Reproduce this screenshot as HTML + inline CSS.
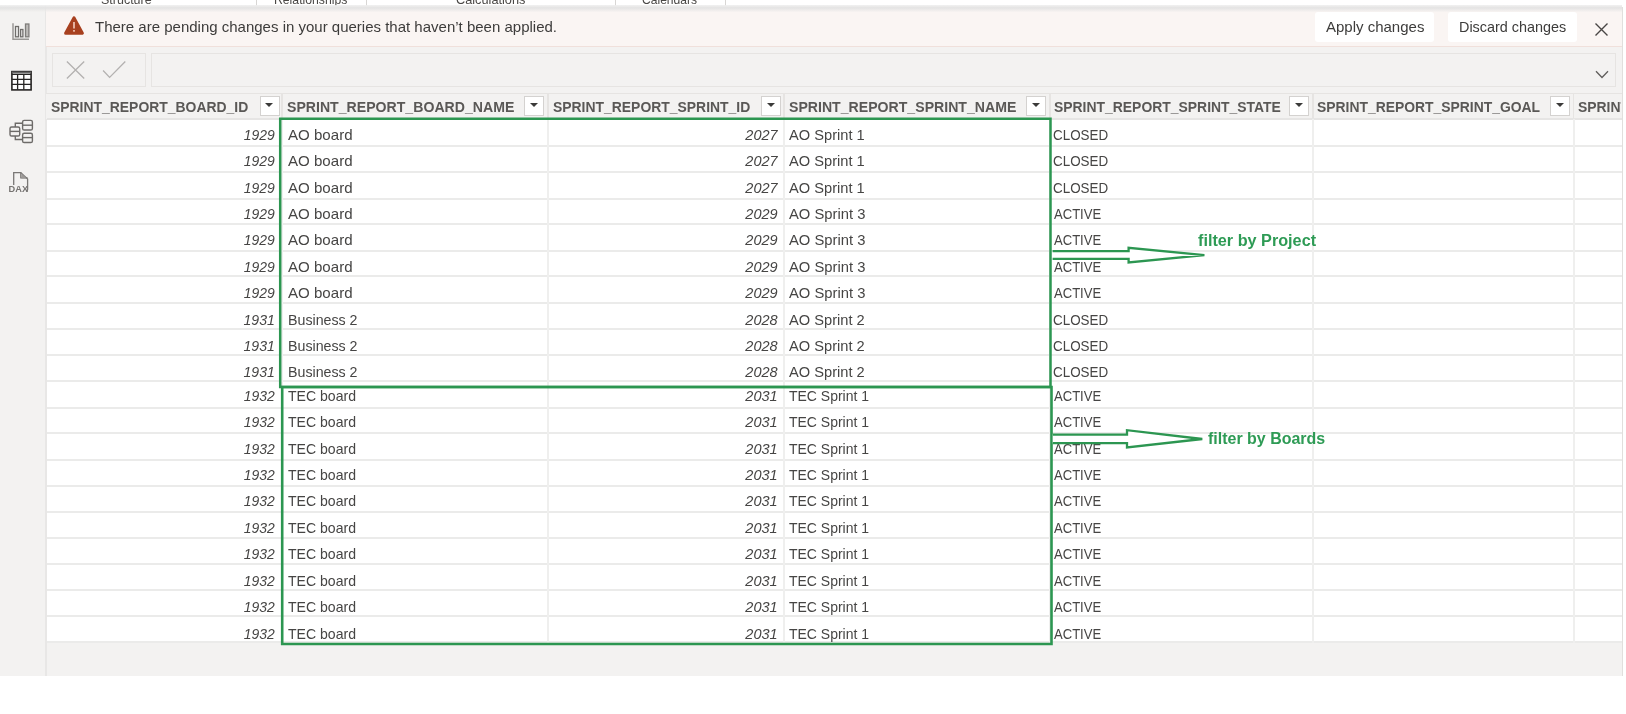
<!DOCTYPE html>
<html><head><meta charset="utf-8"><style>
*{margin:0;padding:0;box-sizing:border-box}
html,body{width:1626px;height:714px;overflow:hidden;background:#fff;font-family:"Liberation Sans", sans-serif}
body{will-change:transform}
.a{position:absolute;white-space:nowrap}
.t{position:absolute;white-space:nowrap;font-size:14.5px;line-height:14.5px;color:#464544}
.r{text-align:right}
.i{font-style:italic}
.h{position:absolute;white-space:nowrap;font-size:14.5px;line-height:14.5px;font-weight:bold;color:#5a5856}
.dd{position:absolute;top:96.2px;width:20.2px;height:19.5px;background:#fff;border:1.5px solid #d4d2d0}
.dd:after{content:"";position:absolute;left:4.5px;top:5.5px;border-left:4px solid transparent;border-right:4px solid transparent;border-top:4.8px solid #3b3a39}
</style></head>
<body>
<div class="a" style="left:0;top:0;width:1626px;height:6px;background:#fff"></div>
<div class="a" style="left:100.9px;top:-7.5px;font-size:13px;line-height:13px;color:#4a4846;transform:scaleX(0.96);transform-origin:left">Structure</div>
<div class="a" style="left:274.4px;top:-7.5px;font-size:13px;line-height:13px;color:#4a4846;transform:scaleX(0.94);transform-origin:left">Relationships</div>
<div class="a" style="left:456px;top:-7.5px;font-size:13px;line-height:13px;color:#4a4846;transform:scaleX(0.98);transform-origin:left">Calculations</div>
<div class="a" style="left:642px;top:-7.5px;font-size:13px;line-height:13px;color:#4a4846;transform:scaleX(0.93);transform-origin:left">Calendars</div>
<div class="a" style="left:255.9px;top:0;width:1px;height:6px;background:#d8d6d4"></div>
<div class="a" style="left:365.6px;top:0;width:1px;height:6px;background:#d8d6d4"></div>
<div class="a" style="left:614.5px;top:0;width:1px;height:6px;background:#d8d6d4"></div>
<div class="a" style="left:725px;top:0;width:1px;height:6px;background:#d8d6d4"></div>
<div class="a" style="left:0;top:4.5px;width:1622px;height:7px;background:linear-gradient(rgba(240,240,240,0.6),#e3e3e3 40%,rgba(243,240,238,0.3))"></div>
<div class="a" style="left:0;top:6px;width:47px;height:670px;background:#f3f2f1;border-right:2px solid #e8e7e6"></div>
<div class="a" style="left:47px;top:7px;width:1575px;height:669px;background:#f3f2f1"></div>
<div class="a" style="left:1622px;top:7px;width:1px;height:669px;background:#e1dfdd"></div>
<div class="a" style="left:46px;top:6px;width:1576px;height:41px;background:#faf5f3;border-bottom:1px solid #f0e0db"></div>
<div class="a" style="left:0;top:4.5px;width:1622px;height:7px;background:linear-gradient(rgba(240,240,240,0.6),#e3e3e3 40%,rgba(243,240,238,0.3))"></div>
<svg class="a" style="left:63px;top:15px" width="22" height="21" viewBox="0 0 22 21"><path d="M11 3 L19.3 18.2 L2.7 18.2 Z" fill="#a8401f" stroke="#a8401f" stroke-width="3.2" stroke-linejoin="round"/><rect x="10.2" y="7" width="1.6" height="6.5" fill="#f3cdbd"/><rect x="10.2" y="15" width="1.6" height="1.7" fill="#f3cdbd"/></svg>
<div class="a" style="left:95px;top:19.4px;font-size:15px;line-height:15px;color:#3d3c3b">There are pending changes in your queries that haven’t been applied.</div>
<div class="a" style="left:1315px;top:12px;width:119px;height:30px;background:#fff;border-radius:3px"></div>
<div class="a" style="left:1448px;top:12px;width:128.5px;height:30px;background:#fff;border-radius:3px"></div>
<div class="a" style="left:1326px;top:18.5px;font-size:15px;line-height:15px;color:#3d3c3b">Apply changes</div>
<div class="a" style="left:1459.4px;top:18.5px;font-size:15px;line-height:15px;color:#3d3c3b;transform:scaleX(0.96);transform-origin:left">Discard changes</div>
<svg class="a" style="left:1594px;top:22px" width="15" height="15" viewBox="0 0 15 15"><path d="M1.5 1.5 L13.5 13.5 M13.5 1.5 L1.5 13.5" stroke="#484644" stroke-width="1.4"/></svg>
<div class="a" style="left:52px;top:53px;width:94px;height:34px;border:1px solid #e6e4e2;background:#f3f2f1"></div>
<svg class="a" style="left:64px;top:60px" width="64" height="20" viewBox="0 0 64 20"><path d="M2.9 1.5 L20.2 18.5 M20.2 1.5 L2.9 18.5" stroke="#b3b1b0" stroke-width="1.3"/><path d="M39.1 10.5 L45.6 17.4 L61.3 1.5" stroke="#b3b1b0" stroke-width="1.3" fill="none"/></svg>
<div class="a" style="left:151px;top:53px;width:1465px;height:34px;border:1px solid #e6e4e2;background:#f3f2f1"></div>
<svg class="a" style="left:1595px;top:70px" width="14" height="9" viewBox="0 0 14 9"><path d="M1 1.2 L7 7.5 L13 1.2" stroke="#605e5c" stroke-width="1.3" fill="none"/></svg>
<div class="a" style="left:46px;top:92.5px;width:1576px;height:26.5px;background:#f3f2f1;border-top:1px solid #e6e4e2"></div>
<div class="h" style="left:51.2px;top:100.3px;transform:scaleX(0.96);transform-origin:left">SPRINT_REPORT_BOARD_ID</div>
<div class="h" style="left:287.3px;top:100.3px;transform:scaleX(0.973);transform-origin:left">SPRINT_REPORT_BOARD_NAME</div>
<div class="h" style="left:552.5px;top:100.3px;transform:scaleX(0.96);transform-origin:left">SPRINT_REPORT_SPRINT_ID</div>
<div class="h" style="left:789px;top:100.3px;transform:scaleX(0.973);transform-origin:left">SPRINT_REPORT_SPRINT_NAME</div>
<div class="h" style="left:1054px;top:100.3px;transform:scaleX(0.96);transform-origin:left">SPRINT_REPORT_SPRINT_STATE</div>
<div class="h" style="left:1317.0px;top:100.3px;transform:scaleX(0.958);transform-origin:left">SPRINT_REPORT_SPRINT_GOAL</div>
<div class="a" style="left:1578.3px;top:0;width:42.700000000000045px;height:120px;overflow:hidden"><div class="h" style="left:0;top:100.3px;transform:scaleX(0.96);transform-origin:left">SPRINT_REPORT</div></div>
<div class="dd" style="left:259.5px"></div>
<div class="dd" style="left:524px"></div>
<div class="dd" style="left:761px"></div>
<div class="dd" style="left:1026.3px"></div>
<div class="dd" style="left:1289px"></div>
<div class="dd" style="left:1550.3px"></div>
<div class="a" style="left:281.0px;top:93px;width:1.5px;height:26px;background:#e6e4e2"></div>
<div class="a" style="left:547.0px;top:93px;width:1.5px;height:26px;background:#e6e4e2"></div>
<div class="a" style="left:783.0px;top:93px;width:1.5px;height:26px;background:#e6e4e2"></div>
<div class="a" style="left:1049.0px;top:93px;width:1.5px;height:26px;background:#e6e4e2"></div>
<div class="a" style="left:1312.0px;top:93px;width:1.5px;height:26px;background:#e6e4e2"></div>
<div class="a" style="left:1572.5px;top:93px;width:1.5px;height:26px;background:#e6e4e2"></div>
<div class="a" style="left:47px;top:118.8px;width:1575px;height:524.2800000000001px;background:#fff"></div>
<div class="a" style="left:47px;top:145px;width:1575px;height:2px;background:#ebebea"></div>
<div class="a" style="left:47px;top:171px;width:1575px;height:2px;background:#ebebea"></div>
<div class="a" style="left:47px;top:198px;width:1575px;height:2px;background:#ebebea"></div>
<div class="a" style="left:47px;top:223px;width:1575px;height:2px;background:#ebebea"></div>
<div class="a" style="left:47px;top:250px;width:1575px;height:2px;background:#ebebea"></div>
<div class="a" style="left:47px;top:275px;width:1575px;height:2px;background:#ebebea"></div>
<div class="a" style="left:47px;top:302px;width:1575px;height:2px;background:#ebebea"></div>
<div class="a" style="left:47px;top:328px;width:1575px;height:2px;background:#ebebea"></div>
<div class="a" style="left:47px;top:354px;width:1575px;height:2px;background:#ebebea"></div>
<div class="a" style="left:47px;top:380px;width:1575px;height:2px;background:#ebebea"></div>
<div class="a" style="left:47px;top:407px;width:1575px;height:2px;background:#ebebea"></div>
<div class="a" style="left:47px;top:432px;width:1575px;height:2px;background:#ebebea"></div>
<div class="a" style="left:47px;top:459px;width:1575px;height:2px;background:#ebebea"></div>
<div class="a" style="left:47px;top:485px;width:1575px;height:2px;background:#ebebea"></div>
<div class="a" style="left:47px;top:511px;width:1575px;height:2px;background:#ebebea"></div>
<div class="a" style="left:47px;top:537px;width:1575px;height:2px;background:#ebebea"></div>
<div class="a" style="left:47px;top:563px;width:1575px;height:2px;background:#ebebea"></div>
<div class="a" style="left:47px;top:589px;width:1575px;height:2px;background:#ebebea"></div>
<div class="a" style="left:47px;top:615px;width:1575px;height:2px;background:#ebebea"></div>
<div class="a" style="left:47px;top:641px;width:1575px;height:2px;background:#ebebea"></div>
<div class="a" style="left:47px;top:118px;width:1575px;height:1.5px;background:#e6e5e4"></div>
<div class="a" style="left:281.0px;top:118.8px;width:2px;height:524.2800000000001px;background:#efefee"></div>
<div class="a" style="left:547.0px;top:118.8px;width:2px;height:524.2800000000001px;background:#efefee"></div>
<div class="a" style="left:783.0px;top:118.8px;width:2px;height:524.2800000000001px;background:#efefee"></div>
<div class="a" style="left:1049.0px;top:118.8px;width:2px;height:524.2800000000001px;background:#efefee"></div>
<div class="a" style="left:1312.0px;top:118.8px;width:2px;height:524.2800000000001px;background:#efefee"></div>
<div class="a" style="left:1572.5px;top:118.8px;width:2px;height:524.2800000000001px;background:#efefee"></div>
<div class="t i r" style="left:200px;width:74.8px;top:127.83px;transform:scaleX(0.96);transform-origin:right">1929</div>
<div class="t" style="left:287.8px;top:127.83px;transform:scaleX(1.04);transform-origin:left">AO board</div>
<div class="t i r" style="left:700px;width:77.6px;top:127.83px;transform:scaleX(1.0);transform-origin:right">2027</div>
<div class="t" style="left:789.2px;top:127.83px;transform:scaleX(1.01);transform-origin:left">AO Sprint 1</div>
<div class="t" style="left:1053.4px;top:127.83px;transform:scaleX(0.925);transform-origin:left">CLOSED</div>
<div class="t i r" style="left:200px;width:74.8px;top:154.23px;transform:scaleX(0.96);transform-origin:right">1929</div>
<div class="t" style="left:287.8px;top:154.23px;transform:scaleX(1.04);transform-origin:left">AO board</div>
<div class="t i r" style="left:700px;width:77.6px;top:154.23px;transform:scaleX(1.0);transform-origin:right">2027</div>
<div class="t" style="left:789.2px;top:154.23px;transform:scaleX(1.01);transform-origin:left">AO Sprint 1</div>
<div class="t" style="left:1053.4px;top:154.23px;transform:scaleX(0.925);transform-origin:left">CLOSED</div>
<div class="t i r" style="left:200px;width:74.8px;top:180.63px;transform:scaleX(0.96);transform-origin:right">1929</div>
<div class="t" style="left:287.8px;top:180.63px;transform:scaleX(1.04);transform-origin:left">AO board</div>
<div class="t i r" style="left:700px;width:77.6px;top:180.63px;transform:scaleX(1.0);transform-origin:right">2027</div>
<div class="t" style="left:789.2px;top:180.63px;transform:scaleX(1.01);transform-origin:left">AO Sprint 1</div>
<div class="t" style="left:1053.4px;top:180.63px;transform:scaleX(0.925);transform-origin:left">CLOSED</div>
<div class="t i r" style="left:200px;width:74.8px;top:207.03px;transform:scaleX(0.96);transform-origin:right">1929</div>
<div class="t" style="left:287.8px;top:207.03px;transform:scaleX(1.04);transform-origin:left">AO board</div>
<div class="t i r" style="left:700px;width:77.6px;top:207.03px;transform:scaleX(1.0);transform-origin:right">2029</div>
<div class="t" style="left:789.2px;top:207.03px;transform:scaleX(1.02);transform-origin:left">AO Sprint 3</div>
<div class="t" style="left:1054.3px;top:207.03px;transform:scaleX(0.9);transform-origin:left">ACTIVE</div>
<div class="t i r" style="left:200px;width:74.8px;top:233.43px;transform:scaleX(0.96);transform-origin:right">1929</div>
<div class="t" style="left:287.8px;top:233.43px;transform:scaleX(1.04);transform-origin:left">AO board</div>
<div class="t i r" style="left:700px;width:77.6px;top:233.43px;transform:scaleX(1.0);transform-origin:right">2029</div>
<div class="t" style="left:789.2px;top:233.43px;transform:scaleX(1.02);transform-origin:left">AO Sprint 3</div>
<div class="t" style="left:1054.3px;top:233.43px;transform:scaleX(0.9);transform-origin:left">ACTIVE</div>
<div class="t i r" style="left:200px;width:74.8px;top:259.83px;transform:scaleX(0.96);transform-origin:right">1929</div>
<div class="t" style="left:287.8px;top:259.83px;transform:scaleX(1.04);transform-origin:left">AO board</div>
<div class="t i r" style="left:700px;width:77.6px;top:259.83px;transform:scaleX(1.0);transform-origin:right">2029</div>
<div class="t" style="left:789.2px;top:259.83px;transform:scaleX(1.02);transform-origin:left">AO Sprint 3</div>
<div class="t" style="left:1054.3px;top:259.83px;transform:scaleX(0.9);transform-origin:left">ACTIVE</div>
<div class="t i r" style="left:200px;width:74.8px;top:286.23px;transform:scaleX(0.96);transform-origin:right">1929</div>
<div class="t" style="left:287.8px;top:286.23px;transform:scaleX(1.04);transform-origin:left">AO board</div>
<div class="t i r" style="left:700px;width:77.6px;top:286.23px;transform:scaleX(1.0);transform-origin:right">2029</div>
<div class="t" style="left:789.2px;top:286.23px;transform:scaleX(1.02);transform-origin:left">AO Sprint 3</div>
<div class="t" style="left:1054.3px;top:286.23px;transform:scaleX(0.9);transform-origin:left">ACTIVE</div>
<div class="t i r" style="left:200px;width:74.8px;top:312.63px;transform:scaleX(0.97);transform-origin:right">1931</div>
<div class="t" style="left:287.8px;top:312.63px;transform:scaleX(0.98);transform-origin:left">Business 2</div>
<div class="t i r" style="left:700px;width:77.6px;top:312.63px;transform:scaleX(1.0);transform-origin:right">2028</div>
<div class="t" style="left:789.2px;top:312.63px;transform:scaleX(1.01);transform-origin:left">AO Sprint 2</div>
<div class="t" style="left:1053.4px;top:312.63px;transform:scaleX(0.925);transform-origin:left">CLOSED</div>
<div class="t i r" style="left:200px;width:74.8px;top:339.03px;transform:scaleX(0.97);transform-origin:right">1931</div>
<div class="t" style="left:287.8px;top:339.03px;transform:scaleX(0.98);transform-origin:left">Business 2</div>
<div class="t i r" style="left:700px;width:77.6px;top:339.03px;transform:scaleX(1.0);transform-origin:right">2028</div>
<div class="t" style="left:789.2px;top:339.03px;transform:scaleX(1.01);transform-origin:left">AO Sprint 2</div>
<div class="t" style="left:1053.4px;top:339.03px;transform:scaleX(0.925);transform-origin:left">CLOSED</div>
<div class="t i r" style="left:200px;width:74.8px;top:365.43px;transform:scaleX(0.97);transform-origin:right">1931</div>
<div class="t" style="left:287.8px;top:365.43px;transform:scaleX(0.98);transform-origin:left">Business 2</div>
<div class="t i r" style="left:700px;width:77.6px;top:365.43px;transform:scaleX(1.0);transform-origin:right">2028</div>
<div class="t" style="left:789.2px;top:365.43px;transform:scaleX(1.01);transform-origin:left">AO Sprint 2</div>
<div class="t" style="left:1053.4px;top:365.43px;transform:scaleX(0.925);transform-origin:left">CLOSED</div>
<div class="t i r" style="left:200px;width:74.8px;top:388.73px;transform:scaleX(0.96);transform-origin:right">1932</div>
<div class="t" style="left:287.8px;top:388.73px;transform:scaleX(0.97);transform-origin:left">TEC board</div>
<div class="t i r" style="left:700px;width:77.6px;top:388.73px;transform:scaleX(1.0);transform-origin:right">2031</div>
<div class="t" style="left:789.2px;top:388.73px;transform:scaleX(0.964);transform-origin:left">TEC Sprint 1</div>
<div class="t" style="left:1054.3px;top:388.73px;transform:scaleX(0.9);transform-origin:left">ACTIVE</div>
<div class="t i r" style="left:200px;width:74.8px;top:415.16px;transform:scaleX(0.96);transform-origin:right">1932</div>
<div class="t" style="left:287.8px;top:415.16px;transform:scaleX(0.97);transform-origin:left">TEC board</div>
<div class="t i r" style="left:700px;width:77.6px;top:415.16px;transform:scaleX(1.0);transform-origin:right">2031</div>
<div class="t" style="left:789.2px;top:415.16px;transform:scaleX(0.964);transform-origin:left">TEC Sprint 1</div>
<div class="t" style="left:1054.3px;top:415.16px;transform:scaleX(0.9);transform-origin:left">ACTIVE</div>
<div class="t i r" style="left:200px;width:74.8px;top:441.59px;transform:scaleX(0.96);transform-origin:right">1932</div>
<div class="t" style="left:287.8px;top:441.59px;transform:scaleX(0.97);transform-origin:left">TEC board</div>
<div class="t i r" style="left:700px;width:77.6px;top:441.59px;transform:scaleX(1.0);transform-origin:right">2031</div>
<div class="t" style="left:789.2px;top:441.59px;transform:scaleX(0.964);transform-origin:left">TEC Sprint 1</div>
<div class="t" style="left:1054.3px;top:441.59px;transform:scaleX(0.9);transform-origin:left">ACTIVE</div>
<div class="t i r" style="left:200px;width:74.8px;top:468.02px;transform:scaleX(0.96);transform-origin:right">1932</div>
<div class="t" style="left:287.8px;top:468.02px;transform:scaleX(0.97);transform-origin:left">TEC board</div>
<div class="t i r" style="left:700px;width:77.6px;top:468.02px;transform:scaleX(1.0);transform-origin:right">2031</div>
<div class="t" style="left:789.2px;top:468.02px;transform:scaleX(0.964);transform-origin:left">TEC Sprint 1</div>
<div class="t" style="left:1054.3px;top:468.02px;transform:scaleX(0.9);transform-origin:left">ACTIVE</div>
<div class="t i r" style="left:200px;width:74.8px;top:494.45px;transform:scaleX(0.96);transform-origin:right">1932</div>
<div class="t" style="left:287.8px;top:494.45px;transform:scaleX(0.97);transform-origin:left">TEC board</div>
<div class="t i r" style="left:700px;width:77.6px;top:494.45px;transform:scaleX(1.0);transform-origin:right">2031</div>
<div class="t" style="left:789.2px;top:494.45px;transform:scaleX(0.964);transform-origin:left">TEC Sprint 1</div>
<div class="t" style="left:1054.3px;top:494.45px;transform:scaleX(0.9);transform-origin:left">ACTIVE</div>
<div class="t i r" style="left:200px;width:74.8px;top:520.88px;transform:scaleX(0.96);transform-origin:right">1932</div>
<div class="t" style="left:287.8px;top:520.88px;transform:scaleX(0.97);transform-origin:left">TEC board</div>
<div class="t i r" style="left:700px;width:77.6px;top:520.88px;transform:scaleX(1.0);transform-origin:right">2031</div>
<div class="t" style="left:789.2px;top:520.88px;transform:scaleX(0.964);transform-origin:left">TEC Sprint 1</div>
<div class="t" style="left:1054.3px;top:520.88px;transform:scaleX(0.9);transform-origin:left">ACTIVE</div>
<div class="t i r" style="left:200px;width:74.8px;top:547.31px;transform:scaleX(0.96);transform-origin:right">1932</div>
<div class="t" style="left:287.8px;top:547.31px;transform:scaleX(0.97);transform-origin:left">TEC board</div>
<div class="t i r" style="left:700px;width:77.6px;top:547.31px;transform:scaleX(1.0);transform-origin:right">2031</div>
<div class="t" style="left:789.2px;top:547.31px;transform:scaleX(0.964);transform-origin:left">TEC Sprint 1</div>
<div class="t" style="left:1054.3px;top:547.31px;transform:scaleX(0.9);transform-origin:left">ACTIVE</div>
<div class="t i r" style="left:200px;width:74.8px;top:573.74px;transform:scaleX(0.96);transform-origin:right">1932</div>
<div class="t" style="left:287.8px;top:573.74px;transform:scaleX(0.97);transform-origin:left">TEC board</div>
<div class="t i r" style="left:700px;width:77.6px;top:573.74px;transform:scaleX(1.0);transform-origin:right">2031</div>
<div class="t" style="left:789.2px;top:573.74px;transform:scaleX(0.964);transform-origin:left">TEC Sprint 1</div>
<div class="t" style="left:1054.3px;top:573.74px;transform:scaleX(0.9);transform-origin:left">ACTIVE</div>
<div class="t i r" style="left:200px;width:74.8px;top:600.17px;transform:scaleX(0.96);transform-origin:right">1932</div>
<div class="t" style="left:287.8px;top:600.17px;transform:scaleX(0.97);transform-origin:left">TEC board</div>
<div class="t i r" style="left:700px;width:77.6px;top:600.17px;transform:scaleX(1.0);transform-origin:right">2031</div>
<div class="t" style="left:789.2px;top:600.17px;transform:scaleX(0.964);transform-origin:left">TEC Sprint 1</div>
<div class="t" style="left:1054.3px;top:600.17px;transform:scaleX(0.9);transform-origin:left">ACTIVE</div>
<div class="t i r" style="left:200px;width:74.8px;top:626.60px;transform:scaleX(0.96);transform-origin:right">1932</div>
<div class="t" style="left:287.8px;top:626.60px;transform:scaleX(0.97);transform-origin:left">TEC board</div>
<div class="t i r" style="left:700px;width:77.6px;top:626.60px;transform:scaleX(1.0);transform-origin:right">2031</div>
<div class="t" style="left:789.2px;top:626.60px;transform:scaleX(0.964);transform-origin:left">TEC Sprint 1</div>
<div class="t" style="left:1054.3px;top:626.60px;transform:scaleX(0.9);transform-origin:left">ACTIVE</div>
<svg class="a" style="left:0;top:0" width="1626" height="714" viewBox="0 0 1626 714">
<path d="M280.2 387 L280.2 118.8 L1050.5 118.8 L1050.5 387 Z" fill="none" stroke="#2c9651" stroke-width="2.5"/>
<path d="M282.2 387 L282.2 644 L1051.5 644 L1051.5 387 Z" fill="none" stroke="#2c9651" stroke-width="2.6"/>
<path d="M1052.6 251.2 L1128.6 251.2 L1128.6 247.8 L1204.4 255.1 L1128.6 262.4 L1128.6 258.8 L1052.6 258.8" fill="#fff" stroke="#2c9651" stroke-width="2.3" stroke-linejoin="miter"/>
<path d="M1052.8 434.6 L1127 434.6 L1127 430.2 L1202.3 439 L1127 447.4 L1127 443.2 L1052.8 443.2" fill="#fff" stroke="#2c9651" stroke-width="2.3" stroke-linejoin="miter"/>
</svg>
<div class="a" style="left:1197.8px;top:233.2px;font-size:15.6px;line-height:15.6px;font-weight:bold;color:#2e9b55;transform:scaleX(1.04);transform-origin:left">filter by Project</div>
<div class="a" style="left:1207.9px;top:430.6px;font-size:15.6px;line-height:15.6px;font-weight:bold;color:#2e9b55;transform:scaleX(1.025);transform-origin:left">filter by Boards</div>
<svg class="a" style="left:10px;top:21px" width="22" height="21" viewBox="0 0 22 21">
<path d="M3 2.3 V18.2 H19" stroke="#9a9896" stroke-width="1.5" fill="none"/>
<rect x="5.5" y="5.5" width="3" height="10.3" stroke="#6f6d6b" stroke-width="1.3" fill="none"/>
<rect x="10.6" y="8.5" width="2.3" height="7.3" stroke="#6f6d6b" stroke-width="1.3" fill="none"/>
<rect x="15.5" y="3" width="3.4" height="12.8" stroke="#7f7d7b" stroke-width="1.3" fill="#bdbbb9"/>
</svg>
<svg class="a" style="left:10px;top:70px" width="23" height="21" viewBox="0 0 23 21">
<rect x="1.9" y="1.6" width="19.2" height="18.3" fill="#fff" stroke="#252423" stroke-width="1.6"/>
<rect x="1.9" y="1.6" width="19.2" height="1.8" fill="#666"/>
<path d="M1.9 4.4 H21 M1.9 9.3 H21 M1.9 14.4 H21 M7.6 4.5 V19.5 M13.8 4.5 V19.5" stroke="#252423" stroke-width="1.3"/>
</svg>
<svg class="a" style="left:0;top:110px" width="46" height="90" viewBox="0 110 46 90">
<g fill="none" stroke="#6d6b69" stroke-width="1.4">
<rect x="22.6" y="120.4" width="9.8" height="9.6" rx="1.6"/>
<path d="M22.6 125.2 H32.4"/>
<rect x="22.6" y="133.3" width="9.8" height="9.2" rx="1.6"/>
<path d="M22.6 137.6 H32.4"/>
<rect x="10" y="127" width="9.7" height="9" rx="1.6"/>
<path d="M10 131.4 H19.7"/>
<path d="M15.3 127 V123.2 H22.6 M15.3 136 V139.5 H22.6"/>
</g>
<g fill="none" stroke="#7a7876" stroke-width="1.3">
<path d="M13.7 185 V172.6 H20.8 L27.6 179 V189.5 Q27.6 191 26 191.5"/>
<path d="M20.8 172.6 V177.8 H27.6"/>
</g>
<path d="M21.3 173.6 L26.6 178.6 H21.3 Z" fill="#9b9997"/>
<text x="8.6" y="191.8" font-family="Liberation Sans" font-weight="bold" font-size="8.6" fill="#767472" textLength="19.5" lengthAdjust="spacingAndGlyphs">DAX</text>
</svg>
</body></html>
